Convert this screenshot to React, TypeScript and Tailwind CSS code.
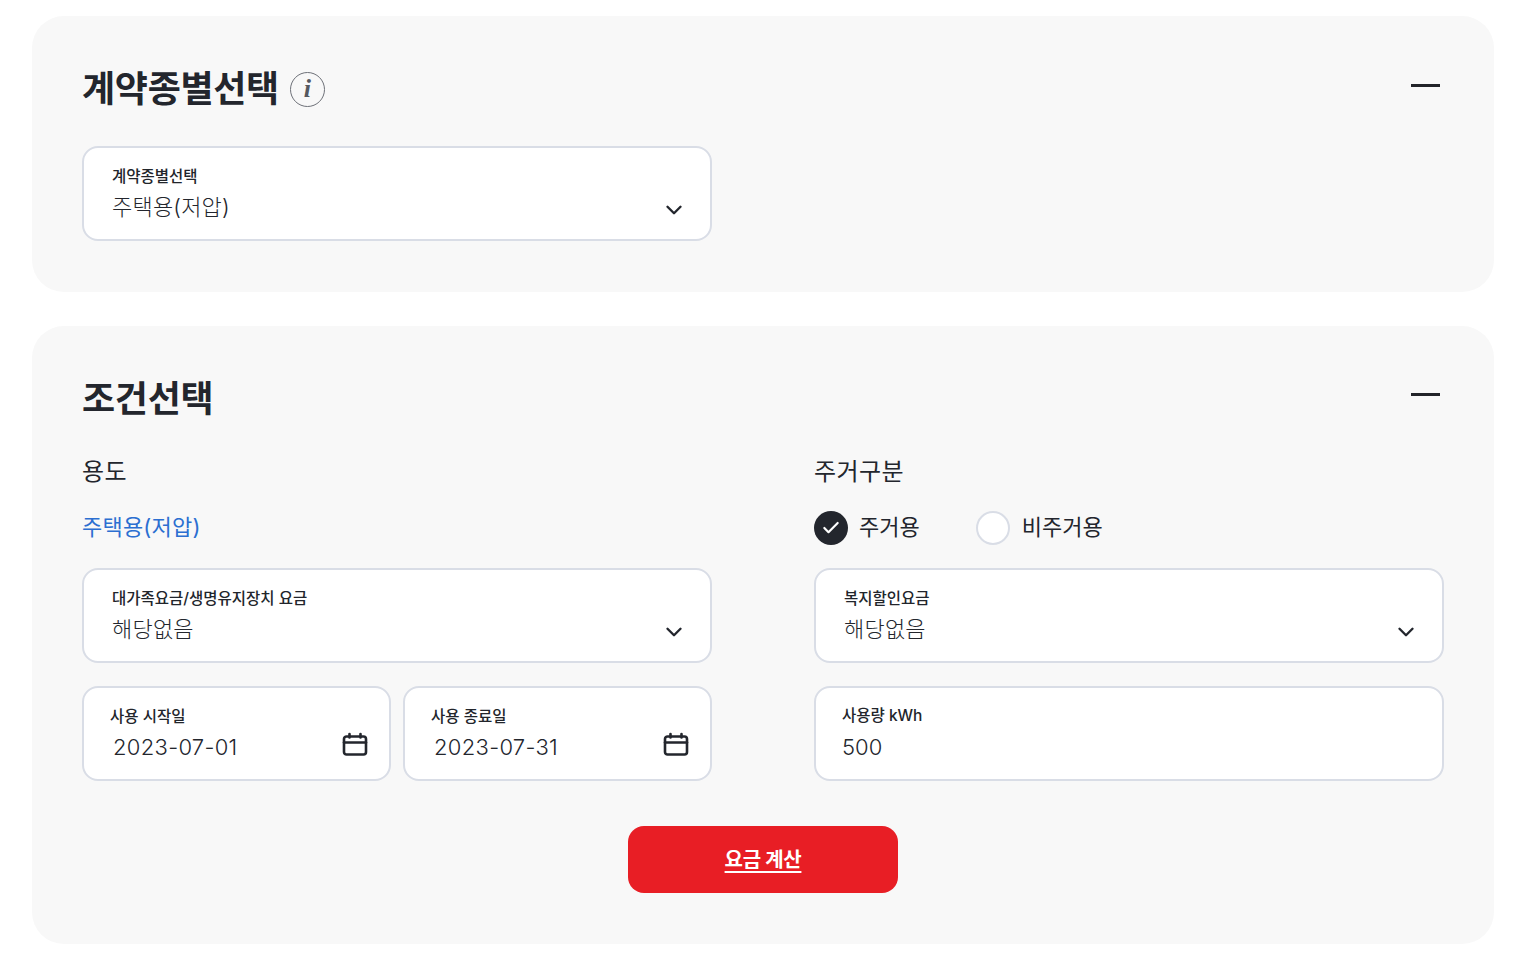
import { ChevronDown, Check } from 'lucide-react'

const font = "font-['Inter','Noto_Sans_CJK_KR','Noto_Sans',sans-serif]"

function Minus() {
  return <div className="w-[29px] h-[3px] bg-[#222429]" />
}

function CalendarIcon() {
  return (
    <svg width="26" height="26" viewBox="0 0 26 26" fill="none" stroke="#23262d" strokeWidth="2.6" strokeLinecap="round" strokeLinejoin="round">
      <rect x="2" y="4.5" width="22" height="18" rx="2.5" />
      <path d="M2 10.5h22" />
      <path d="M7.5 2v3.5M18.5 2v3.5" />
    </svg>
  )
}

function SelectBox({ label, value }: { label: string; value: string }) {
  return (
    <div className="relative h-[95px] rounded-2xl border-2 border-[#d9dde6] bg-white pl-[28px] pt-[18px]">
      <p className="text-[15.5px] leading-[22px] font-medium text-[#22252b]">{label}</p>
      <p className="mt-[3px] text-[22px] leading-[32px] font-light tracking-[0.2px] text-[#23262d]">{value}</p>
      <ChevronDown className="absolute right-[23px] top-[49px]" size={26} strokeWidth={2.2} color="#23262d" />
    </div>
  )
}

function DateBox({ label, value }: { label: string; value: string }) {
  return (
    <div className="flex-1 relative h-[95px] rounded-2xl border-2 border-[#d9dde6] bg-white pl-[26px] pt-[18px]">
      <p className="text-[15.5px] leading-[22px] font-medium text-[#22252b]">{label}</p>
      <p className="mt-[3px] ml-[3px] text-[22px] leading-[32px] font-light tracking-[0.3px] text-[#23262d]">{value}</p>
      <div className="absolute right-[21px] top-[44px]"><CalendarIcon /></div>
    </div>
  )
}

export default function App() {
  return (
    <div className={`${font} min-h-screen bg-white px-[32px] pt-[16px] pr-[22px]`}>
      <section className="h-[276px] rounded-[32px] bg-[#f8f8f8] pl-[50px] pr-[50px] pt-[47px]">
        <div className="flex items-start justify-between">
          <div className="flex items-center gap-[11px] h-[52px]">
            <h2 className="text-[36px] leading-[52px] font-bold tracking-[-0.3px] text-[#23262d]">계약종별선택</h2>
            <div className="w-[35px] h-[35px] rounded-full border-[1.5px] border-[#6e7178] flex items-center justify-center font-['Liberation_Serif',serif] italic font-bold text-[26px] leading-none text-[#55585f]">
              i
            </div>
          </div>
          <div className="pt-[21px] pr-[4px]"><Minus /></div>
        </div>
        <div className="mt-[31px] w-[630px]">
          <SelectBox label="계약종별선택" value="주택용(저압)" />
        </div>
      </section>

      <section className="mt-[34px] h-[618px] rounded-[32px] bg-[#f8f8f8] pl-[50px] pr-[50px] pt-[47px]">
        <div className="flex items-start justify-between">
          <h2 className="text-[36px] leading-[52px] font-bold tracking-[-0.3px] text-[#23262d]">조건선택</h2>
          <div className="pt-[20px] pr-[4px]"><Minus /></div>
        </div>

        <div className="mt-[29px] grid grid-cols-[630px_630px] gap-x-[102px]">
          <div>
            <p className="text-[24px] leading-[36px] tracking-[0.4px] text-[#23262d]">용도</p>
            <p className="mt-[19px] h-[36px] text-[22px] leading-[36px] tracking-[0.2px] text-[#2c6fd1]">주택용(저압)</p>
            <div className="mt-[23px]">
              <SelectBox label="대가족요금/생명유지장치 요금" value="해당없음" />
            </div>
            <div className="mt-[23px] flex gap-[12px]">
              <DateBox label="사용 시작일" value="2023-07-01" />
              <DateBox label="사용 종료일" value="2023-07-31" />
            </div>
          </div>
          <div>
            <p className="text-[24px] leading-[36px] tracking-[0.4px] text-[#23262d]">주거구분</p>
            <div className="mt-[19px] h-[36px] flex items-center">
              <div className="mt-[2px] w-[34px] h-[34px] rounded-full bg-[#23262d] flex items-center justify-center">
                <Check size={20} strokeWidth={2.6} color="#ffffff" />
              </div>
              <span className="ml-[11px] text-[22px] leading-[36px] text-[#23262d]">주거용</span>
              <div className="mt-[2px] ml-[56px] w-[34px] h-[34px] rounded-full border-2 border-[#d9dde6] bg-white" />
              <span className="ml-[12px] text-[22px] leading-[36px] text-[#23262d]">비주거용</span>
            </div>
            <div className="mt-[23px]">
              <SelectBox label="복지할인요금" value="해당없음" />
            </div>
            <div className="mt-[23px] h-[95px] rounded-2xl border-2 border-[#d9dde6] bg-white pl-[26px] pt-[17px]">
              <p className="text-[15.5px] leading-[22px] font-medium text-[#22252b]">사용량 kWh</p>
              <p className="mt-[4px] text-[22px] leading-[32px] font-light text-[#23262d]">500</p>
            </div>
          </div>
        </div>

        <div className="mt-[45px] flex justify-center">
          <button className="w-[270px] h-[67px] rounded-2xl bg-[#e81e25] text-white text-[20px] font-bold tracking-[-0.3px] underline underline-offset-[4px]">
            요금 계산
          </button>
        </div>
      </section>
    </div>
  )
}
